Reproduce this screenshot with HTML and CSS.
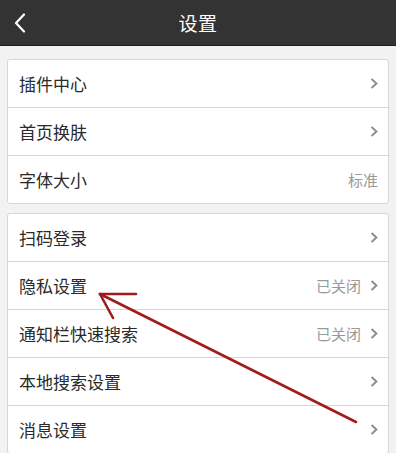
FILE: index.html
```html
<!DOCTYPE html>
<html lang="zh-CN">
<head>
<meta charset="utf-8">
<title>设置</title>
<link rel="stylesheet" href="styles.css">
</head>
<body>
<div class="page">
  <header class="topbar">
    <svg class="back" width="12" height="20" viewBox="0 0 12 20"><polyline points="10,1.5 2,10 10,18.5" fill="none" stroke="#fff" stroke-width="2.2" stroke-linecap="round" stroke-linejoin="round"/></svg>
    <h1 class="title">设置</h1>
  </header>
  <main class="content">
    <section class="card">
      <div class="row"><span class="label">插件中心</span><span class="right"><svg class="chev" width="8" height="11" viewBox="0 0 8 11"><polyline points="1.5,1 6.5,5.5 1.5,10" fill="none" stroke="#8a8a8a" stroke-width="1.8"/></svg></span></div>
      <div class="row"><span class="label">首页换肤</span><span class="right"><svg class="chev" width="8" height="11" viewBox="0 0 8 11"><polyline points="1.5,1 6.5,5.5 1.5,10" fill="none" stroke="#8a8a8a" stroke-width="1.8"/></svg></span></div>
      <div class="row"><span class="label">字体大小</span><span class="right"><span class="value">标准</span></span></div>
    </section>
    <section class="card">
      <div class="row"><span class="label">扫码登录</span><span class="right"><svg class="chev" width="8" height="11" viewBox="0 0 8 11"><polyline points="1.5,1 6.5,5.5 1.5,10" fill="none" stroke="#8a8a8a" stroke-width="1.8"/></svg></span></div>
      <div class="row"><span class="label">隐私设置</span><span class="right"><span class="value">已关闭</span><svg class="chev" width="8" height="11" viewBox="0 0 8 11"><polyline points="1.5,1 6.5,5.5 1.5,10" fill="none" stroke="#8a8a8a" stroke-width="1.8"/></svg></span></div>
      <div class="row"><span class="label">通知栏快速搜索</span><span class="right"><span class="value">已关闭</span><svg class="chev" width="8" height="11" viewBox="0 0 8 11"><polyline points="1.5,1 6.5,5.5 1.5,10" fill="none" stroke="#8a8a8a" stroke-width="1.8"/></svg></span></div>
      <div class="row"><span class="label">本地搜索设置</span><span class="right"><svg class="chev" width="8" height="11" viewBox="0 0 8 11"><polyline points="1.5,1 6.5,5.5 1.5,10" fill="none" stroke="#8a8a8a" stroke-width="1.8"/></svg></span></div>
      <div class="row"><span class="label">消息设置</span><span class="right"><svg class="chev" width="8" height="11" viewBox="0 0 8 11"><polyline points="1.5,1 6.5,5.5 1.5,10" fill="none" stroke="#8a8a8a" stroke-width="1.8"/></svg></span></div>
    </section>
  </main>
  <svg class="annot" width="396" height="453" viewBox="0 0 396 453">
    <g stroke="#a01c1c" stroke-width="2.6" stroke-linecap="round" fill="none">
      <line x1="356" y1="422" x2="100" y2="294"/>
      <line x1="100" y1="294" x2="136" y2="294"/>
      <line x1="100" y1="294" x2="113" y2="318"/>
    </g>
  </svg>
</div>
</body>
</html>
```

FILE: styles.css
```css
* { box-sizing: border-box; }
html, body { margin: 0; padding: 0; }
body {
  background: #f2f2f2;
  font-family: "Noto Sans CJK SC", "Noto Sans", sans-serif;
  width: 396px;
  height: 453px;
  overflow: hidden;
}
.page { position: relative; width: 396px; height: 453px; }
.topbar {
  height: 46px;
  background: #333333;
  border-bottom: 1px solid #1c1c1c;
  display: flex;
  align-items: center;
  justify-content: center;
  position: relative;
}
.back { position: absolute; left: 14px; top: 13px; }
.title {
  margin: 0;
  color: #fff;
  font-size: 19px;
  font-weight: normal;
  line-height: 1;
  letter-spacing: 0.5px;
}
.content {
  padding: 13px 7px 0 7px;
  display: flex;
  flex-direction: column;
  gap: 9px;
}
.card {
  background: #fff;
  border: 1px solid #d6d6d6;
  border-radius: 3px;
}
.row {
  height: 48px;
  display: flex;
  align-items: center;
  justify-content: space-between;
  padding: 0 10px 0 11px;
  border-bottom: 1px solid #d6d6d6;
}
.row:last-child { border-bottom: none; height: 47px; }
.label { font-size: 17px; color: #2a2a2a; line-height: 1; }
.right { display: flex; align-items: center; gap: 9px; }
.value { font-size: 15px; color: #999; line-height: 1; }
.chev { display: block; }
.annot { position: absolute; left: 0; top: 0; pointer-events: none; }
```
